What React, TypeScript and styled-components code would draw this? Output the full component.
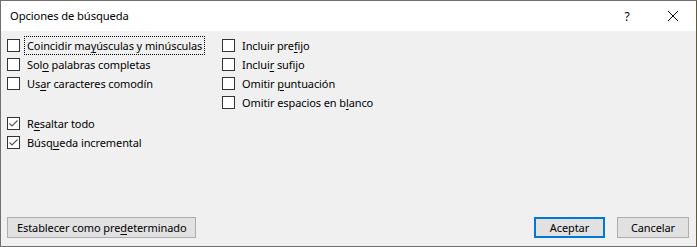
import React from "react";
import styled, { createGlobalStyle } from "styled-components";

const Global = createGlobalStyle`
  html, body { margin: 0; padding: 0; background: #ffffff; }
  body { font-family: "Noto Sans", "Open Sans", sans-serif; }
`;

const FONT = `"Noto Sans", "Open Sans", sans-serif`;

const Window = styled.div`
  box-sizing: border-box;
  width: 697px;
  height: 247px;
  border: 1px solid #707070;
  border-right-color: #5e5a3a;
  background: #f0f0f0;
  display: flex;
  flex-direction: column;
  font-family: ${FONT};
  font-size: 11px;
  letter-spacing: -0.1px;
  color: #000;
`;

const TitleBar = styled.div`
  height: 30px;
  background: #fff;
  display: flex;
  align-items: center;
  padding-left: 9px;
`;

const Title = styled.div`
  flex: 1;
  font-size: 11.2px;
  padding-bottom: 1px;
`;

const TitleButton = styled.div<{ $w: number }>`
  width: ${(p) => p.$w}px;
  height: 30px;
  display: flex;
  align-items: center;
  justify-content: center;
  font-size: 12px;
`;

const Body = styled.div`
  flex: 1;
  display: flex;
  flex-direction: column;
  padding: 5px 7px 8px 6px;
`;

const Columns = styled.div`
  display: flex;
`;

const Column = styled.div<{ $w?: number }>`
  display: flex;
  flex-direction: column;
  width: ${(p) => (p.$w ? `${p.$w}px` : "auto")};
`;

const Row = styled.label`
  height: 19px;
  display: flex;
  align-items: center;
`;

const Box = styled.span`
  box-sizing: border-box;
  width: 13px;
  height: 13px;
  border: 1px solid #333;
  background: #fff;
  display: flex;
  align-items: center;
  justify-content: center;
  flex-shrink: 0;
`;

const Label = styled.span<{ $focus?: boolean }>`
  margin-left: 4px;
  padding: 0 2px;
  height: 17px;
  line-height: 17px;
  border: 1px dotted ${(p) => (p.$focus ? "#000" : "transparent")};
  white-space: nowrap;
`;

const U = styled.span`
  text-decoration: underline;
  text-underline-offset: 2px;
`;

const Spacer = styled.div`
  height: 21px;
`;

const Footer = styled.div`
  margin-top: auto;
  display: flex;
  align-items: center;
  gap: 12px;
`;

const Button = styled.button<{ $primary?: boolean; $w?: number }>`
  box-sizing: border-box;
  height: 21px;
  min-width: ${(p) => (p.$w ? `${p.$w}px` : "auto")};
  padding: 0 9px;
  font-family: ${FONT};
  font-size: 11px;
  letter-spacing: -0.1px;
  color: #000;
  background: #e1e1e1;
  border: ${(p) => (p.$primary ? "2px solid #0078d7" : "1px solid #adadad")};
  margin: 0;
`;

const Grow = styled.div`
  flex: 1;
`;

const Check = () => (
  <svg width="11" height="11" viewBox="0 0 11 11">
    <path d="M1.5 5.5 L4 8 L9.5 2.5" fill="none" stroke="#555" strokeWidth="1.1" />
  </svg>
);

const Opt = ({ children, checked, focus }: { children: React.ReactNode; checked?: boolean; focus?: boolean }) => (
  <Row>
    <Box>{checked && <Check />}</Box>
    <Label $focus={focus}>{children}</Label>
  </Row>
);

export default function App() {
  return (
    <>
      <Global />
      <Window>
        <TitleBar>
          <Title>Opciones de búsqueda</Title>
          <TitleButton $w={46}>?</TitleButton>
          <TitleButton $w={46}>
            <svg width="10" height="10" viewBox="0 0 10 10">
              <path d="M0 0 L10 10 M10 0 L0 10" stroke="#000" strokeWidth="1" />
            </svg>
          </TitleButton>
        </TitleBar>
        <Body>
          <Columns>
            <Column $w={215}>
              <Opt focus>
                Coincidir ma<U>y</U>úsculas y minúsculas
              </Opt>
              <Opt>
                Sol<U>o</U> palabras completas
              </Opt>
              <Opt>
                Us<U>a</U>r caracteres comodín
              </Opt>
              <Spacer />
              <Opt checked>
                R<U>e</U>saltar todo
              </Opt>
              <Opt checked>
                Búsq<U>u</U>eda incremental
              </Opt>
            </Column>
            <Column>
              <Opt>
                Incluir pre<U>f</U>ijo
              </Opt>
              <Opt>
                Inclui<U>r</U> sufijo
              </Opt>
              <Opt>
                Omitir <U>p</U>untuación
              </Opt>
              <Opt>
                Omitir espacios en b<U>l</U>anco
              </Opt>
            </Column>
          </Columns>
          <Footer>
            <Button>
              Establecer como pre<U>d</U>eterminado
            </Button>
            <Grow />
            <Button $primary $w={71}>Aceptar</Button>
            <Button $w={72}>Cancelar</Button>
          </Footer>
        </Body>
      </Window>
    </>
  );
}
